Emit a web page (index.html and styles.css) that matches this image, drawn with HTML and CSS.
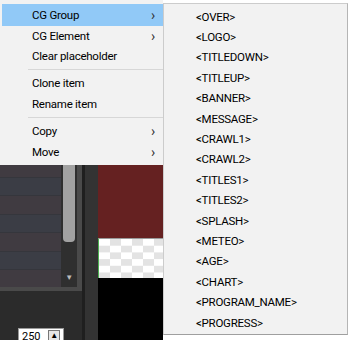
FILE: index.html
```html
<!DOCTYPE html>
<html lang="en">
<head>
    <meta charset="UTF-8">
    <meta name="viewport" content="width=device-width, initial-scale=1.0">
    <title>CG Menu</title>
    <link rel="stylesheet" href="styles.css">
</head>
<body>
    <div class="tela">
        <div class="app">
            <div class="painel_esq">
                <div class="lista">
                    <div class="linhas">
                        <div class="linha"></div>
                        <div class="linha"></div>
                        <div class="linha"></div>
                        <div class="linha"></div>
                        <div class="linha"></div>
                        <div class="linha"></div>
                        <div class="linha"></div>
                        <div class="linha"></div>
                        <div class="linha"></div>
                        <div class="linha"></div>
                        <div class="linha"></div>
                        <div class="linha"></div>
                        <div class="linha"></div>
                        <div class="linha"></div>
                        <div class="linha"></div>
                    </div>
                    <div class="scroll">
                        <div class="scroll_thumb"></div>
                        <div class="scroll_seta">&#9660;</div>
                    </div>
                </div>
                <div class="rodape">
                    <div class="spin">
                        <span class="spin_valor">250</span>
                        <span class="spin_btn">&#9650;</span>
                    </div>
                </div>
            </div>
            <div class="divisor"></div>
            <div class="calha"></div>
            <div class="preview">
                <div class="prev_vermelho"></div>
                <div class="prev_xadrez"></div>
                <div class="prev_preto"></div>
            </div>
        </div>
        <div class="fundo"></div>

        <!-- menu principal -->
        <div class="menu menu_principal">
            <div class="item ativo"><span>CG Group</span><span class="seta">&#8250;</span></div>
            <div class="item"><span>CG Element</span><span class="seta">&#8250;</span></div>
            <div class="item"><span>Clear placeholder</span></div>
            <div class="sep"></div>
            <div class="item"><span>Clone item</span></div>
            <div class="item"><span>Rename item</span></div>
            <div class="sep"></div>
            <div class="item"><span>Copy</span><span class="seta">&#8250;</span></div>
            <div class="item"><span>Move</span><span class="seta">&#8250;</span></div>
        </div>

        <!-- submenu CG Group -->
        <div class="menu submenu">
            <div class="item">&lt;OVER&gt;</div>
            <div class="item">&lt;LOGO&gt;</div>
            <div class="item">&lt;TITLEDOWN&gt;</div>
            <div class="item">&lt;TITLEUP&gt;</div>
            <div class="item">&lt;BANNER&gt;</div>
            <div class="item">&lt;MESSAGE&gt;</div>
            <div class="item">&lt;CRAWL1&gt;</div>
            <div class="item">&lt;CRAWL2&gt;</div>
            <div class="item">&lt;TITLES1&gt;</div>
            <div class="item">&lt;TITLES2&gt;</div>
            <div class="item">&lt;SPLASH&gt;</div>
            <div class="item">&lt;METEO&gt;</div>
            <div class="item">&lt;AGE&gt;</div>
            <div class="item">&lt;CHART&gt;</div>
            <div class="item">&lt;PROGRAM_NAME&gt;</div>
            <div class="item">&lt;PROGRESS&gt;</div>
        </div>
    </div>
</body>
</html>
```
FILE: styles.css
```css
*{
    padding: 0px;
    margin: 0px;
    border: none;
    box-sizing: border-box;
}
body{
    background-color: #fff;
    font-family: Roboto, "Liberation Sans", sans-serif;
    font-size: 11.5px;
    letter-spacing: -0.25px;
    color: #000;
    overflow: hidden;
}
.tela{
    position: relative;
    display: flex;
    flex-direction: row;
    width: 350px;
    height: 340px;
}
.app{
    display: flex;
    flex-direction: row;
    width: 163px;
    height: 340px;
    background-color: #2b2b2b;
}
.fundo{
    flex: 1;
    background-color: #fff;
}
.painel_esq{
    display: flex;
    flex-direction: column;
    width: 82px;
}
.lista{
    display: flex;
    flex-direction: row;
    height: 291px;
    background-color: #4a4a4a;
    padding: 0px 5px 4px 0px;
}
.linhas{
    display: flex;
    flex-direction: column;
    width: 61px;
    overflow: hidden;
    padding-top: 158px;
}
.linha{
    flex: none;
    height: 18.5px;
    background-color: #3b3d45;
    border-top: 1px solid #35363c;
}
.linha:nth-child(odd){
    background-color: #403b41;
}
.scroll{
    position: relative;
    width: 16px;
    background-color: #2f2f2f;
    padding: 0px 2px;
}
.scroll_thumb{
    height: 242px;
    background-color: #a2a2a2;
    border-radius: 0px 0px 4px 4px;
}
.scroll_seta{
    text-align: center;
    color: #bbb;
    font-size: 8px;
    margin-top: 31px;
}
.rodape{
    flex: 1;
    padding: 37px 0px 0px 18px;
}
.spin{
    display: flex;
    align-items: flex-start;
    width: 46px;
    height: 16px;
    background-color: #fff;
    border: 1px solid #999;
    padding: 1px 0px 0px 3px;
}
.spin_valor{
    flex: 1;
    font-size: 11px;
    line-height: 12px;
    margin-top: 1px;
    letter-spacing: 0px;
}
.spin_btn{
    width: 12px;
    height: 12px;
    margin-right: 3px;
    font-size: 8px;
    line-height: 10px;
    text-align: center;
    background-color: #e6e6e6;
    border: 1px solid #777;
}
.divisor{
    width: 3px;
    background-color: #1f1f1f;
}
.calha{
    width: 13px;
    background-color: #333;
}
.preview{
    display: flex;
    flex-direction: column;
    width: 65px;
}
.prev_vermelho{
    height: 238px;
    background-color: #652121;
}
.prev_xadrez{
    height: 40px;
    background-color: #fff;
    background-image: conic-gradient(#e3e3e3 25%, #fff 25% 50%, #e3e3e3 50% 75%, #fff 75%);
    background-size: 22px 13.4px;
    border-top: 1px solid #9a9a9a;
    border-left: 1px solid #4caf50;
}
.prev_preto{
    flex: 1;
    background-color: #000;
}
.menu{
    position: absolute;
    display: flex;
    flex-direction: column;
    background-color: #f2f2f2;
}
.menu_principal{
    left: 0px;
    top: 0px;
    width: 163px;
    height: 165px;
    padding: 4px 0px 0px 2px;
}
.submenu{
    left: 163px;
    top: 3px;
    width: 185px;
    height: 332px;
    padding-top: 2.5px;
    border: 1px solid #cccccc;
    border-right-color: #b5b5b5;
    border-bottom-color: #9f9f9f;
}
.item{
    display: flex;
    align-items: center;
    justify-content: space-between;
    height: 20.4px;
    padding-left: 30px;
    padding-right: 8px;
    white-space: nowrap;
}
.menu_principal .item:first-child{
    height: 22px;
    margin-bottom: -0.5px;
}
.submenu .item{
    padding-left: 32px;
}
.ativo{
    background-color: #91c9f7;
}
.seta{
    font-size: 14px;
    color: #333;
}
.sep{
    height: 7px;
    margin-left: 26px;
    border-top: 3px solid #f2f2f2;
    border-bottom: 3px solid #f2f2f2;
    background-color: #d7d7d7;
}
```
